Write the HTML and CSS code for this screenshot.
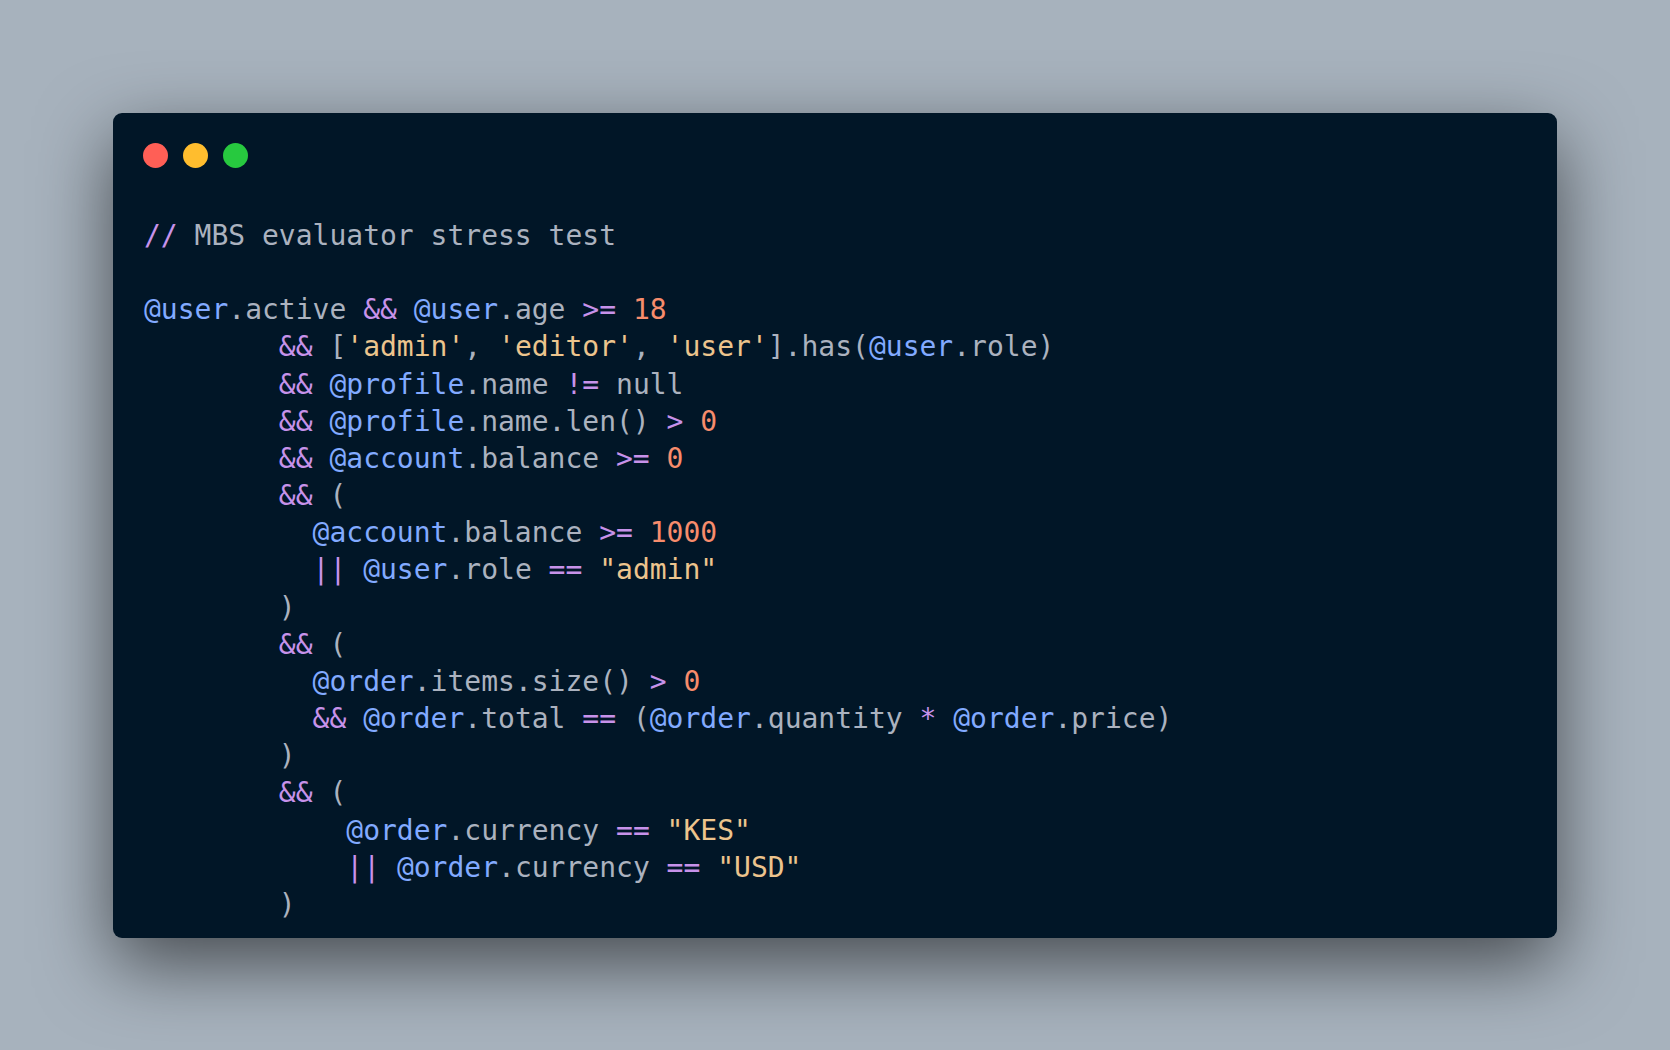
FILE: index.html
```html
<!DOCTYPE html>
<html>
<head>
<meta charset="utf-8">
<link rel="stylesheet" href="styles.css">
</head>
<body>
<div class="stage">
  <div class="window">
    <div class="dots">
      <span class="dot red"></span>
      <span class="dot yellow"></span>
      <span class="dot green"></span>
    </div>
<pre class="code"><span class="op">//</span> <span class="cm">MBS evaluator stress test</span>

<span class="v">@user</span>.active <span class="op">&amp;&amp;</span> <span class="v">@user</span>.age <span class="op">&gt;=</span> <span class="n">18</span>
        <span class="op">&amp;&amp;</span> [<span class="s">'admin'</span>, <span class="s">'editor'</span>, <span class="s">'user'</span>].has(<span class="v">@user</span>.role)
        <span class="op">&amp;&amp;</span> <span class="v">@profile</span>.name <span class="op">!=</span> null
        <span class="op">&amp;&amp;</span> <span class="v">@profile</span>.name.len() <span class="op">&gt;</span> <span class="n">0</span>
        <span class="op">&amp;&amp;</span> <span class="v">@account</span>.balance <span class="op">&gt;=</span> <span class="n">0</span>
        <span class="op">&amp;&amp;</span> (
          <span class="v">@account</span>.balance <span class="op">&gt;=</span> <span class="n">1000</span>
          <span class="op">||</span> <span class="v">@user</span>.role <span class="op">==</span> <span class="s">"admin"</span>
        )
        <span class="op">&amp;&amp;</span> (
          <span class="v">@order</span>.items.size() <span class="op">&gt;</span> <span class="n">0</span>
          <span class="op">&amp;&amp;</span> <span class="v">@order</span>.total <span class="op">==</span> (<span class="v">@order</span>.quantity <span class="op">*</span> <span class="v">@order</span>.price)
        )
        <span class="op">&amp;&amp;</span> (
            <span class="v">@order</span>.currency <span class="op">==</span> <span class="s">"KES"</span>
            <span class="op">||</span> <span class="v">@order</span>.currency <span class="op">==</span> <span class="s">"USD"</span>
        )</pre>
  </div>
</div>
</body>
</html>
```
FILE: styles.css
```css
html, body {
  margin: 0;
  padding: 0;
}
body {
  background: #a7b2bd;
  width: 1670px;
  height: 1050px;
  overflow: hidden;
}
.stage {
  padding: 113px 0 0 113px;
}
.window {
  width: 1444px;
  height: 825px;
  box-sizing: border-box;
  background: #011627;
  border-radius: 9px;
  padding: 30px 30px 0 30px;
  box-shadow: 0 26px 75px rgba(0, 0, 0, 0.58);
}
.dots {
  display: flex;
  gap: 15px;
}
.dot {
  width: 25px;
  height: 25px;
  border-radius: 50%;
  display: block;
}
.red { background: #ff5f56; }
.yellow { background: #ffbd2e; }
.green { background: #27c93f; }
.code {
  margin: 49px 0 0 1px;
  font-family: "DejaVu Sans Mono", monospace;
  font-size: 28px;
  line-height: 37.15px;
  color: #abb2bf;
  white-space: pre;
}
.op { color: #c792ea; }
.cm { color: #abb2bf; }
.v { color: #82aaff; }
.n { color: #f78c6c; }
.s { color: #ecc48d; }
```
